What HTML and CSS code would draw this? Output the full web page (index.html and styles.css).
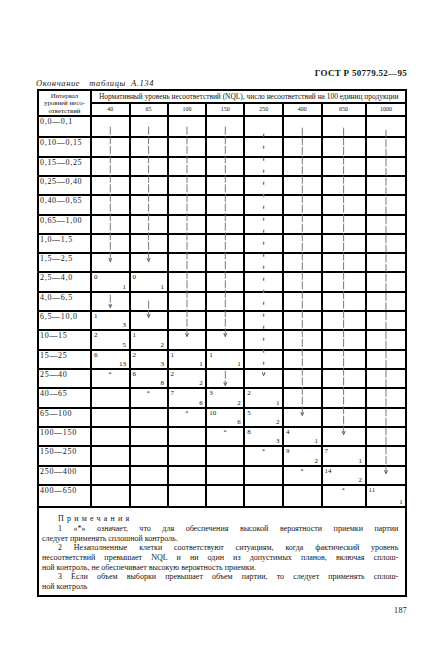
FILE: index.html
```html
<!DOCTYPE html>
<html lang="ru">
<head>
<meta charset="utf-8">
<title>ГОСТ Р 50779.52—95</title>
<link rel="stylesheet" href="styles.css">
</head>
<body>
<div class="page">
  <div class="doc-title">ГОСТ Р 50779.52—95</div>
  <div class="caption"><span class="w1">Окончание</span><span class="w2">таблицы</span><span class="w3">А.134</span></div>

  <div class="table-wrap">
    <div class="grid">
      <div class="h-int">Интервал<br>уровней несо-<br>ответствий</div>
      <div class="h-nql">Нормативный уровень несоответствий (NQL), число несоответствий на 100 единиц продукции</div>
      <div class="h-num">40</div><div class="h-num">65</div><div class="h-num">100</div><div class="h-num">150</div><div class="h-num">250</div><div class="h-num">400</div><div class="h-num">650</div><div class="h-num">1000</div>

      <div class="lbl">0,0—0,1</div><div class="c"></div><div class="c"></div><div class="c"></div><div class="c"></div><div class="c"></div><div class="c"></div><div class="c"></div><div class="c"></div>
      <div class="lbl">0,10—0,15</div><div class="c"></div><div class="c"></div><div class="c"></div><div class="c"></div><div class="c"></div><div class="c"></div><div class="c"></div><div class="c"></div>
      <div class="lbl">0,15—0,25</div><div class="c"></div><div class="c"></div><div class="c"></div><div class="c"></div><div class="c"></div><div class="c"></div><div class="c"></div><div class="c"></div>
      <div class="lbl">0,25—0,40</div><div class="c"></div><div class="c"></div><div class="c"></div><div class="c"></div><div class="c"></div><div class="c"></div><div class="c"></div><div class="c"></div>
      <div class="lbl">0,40—0,65</div><div class="c"></div><div class="c"></div><div class="c"></div><div class="c"></div><div class="c"></div><div class="c"></div><div class="c"></div><div class="c"></div>
      <div class="lbl">0,65—1,00</div><div class="c"></div><div class="c"></div><div class="c"></div><div class="c"></div><div class="c"></div><div class="c"></div><div class="c"></div><div class="c"></div>
      <div class="lbl">1,0—1,5</div><div class="c"></div><div class="c"></div><div class="c"></div><div class="c"></div><div class="c"></div><div class="c"></div><div class="c"></div><div class="c"></div>
      <div class="lbl">1,5—2,5</div><div class="c"></div><div class="c"></div><div class="c"></div><div class="c"></div><div class="c"></div><div class="c"></div><div class="c"></div><div class="c"></div>
      <div class="lbl">2,5—4,0</div><div class="c"><span class="a">0</span><span class="b">1</span></div><div class="c"><span class="a">0</span><span class="b">1</span></div><div class="c"></div><div class="c"></div><div class="c"></div><div class="c"></div><div class="c"></div><div class="c"></div>
      <div class="lbl">4,0—6,5</div><div class="c"></div><div class="c"></div><div class="c"></div><div class="c"></div><div class="c"></div><div class="c"></div><div class="c"></div><div class="c"></div>
      <div class="lbl">6,5—10,0</div><div class="c"><span class="a">1</span><span class="b">3</span></div><div class="c"></div><div class="c"></div><div class="c"></div><div class="c"></div><div class="c"></div><div class="c"></div><div class="c"></div>
      <div class="lbl">10—15</div><div class="c"><span class="a">2</span><span class="b">5</span></div><div class="c"><span class="a">1</span><span class="b">2</span></div><div class="c"></div><div class="c"></div><div class="c"></div><div class="c"></div><div class="c"></div><div class="c"></div>
      <div class="lbl">15—25</div><div class="c"><span class="a">6</span><span class="b">13</span></div><div class="c"><span class="a">2</span><span class="b">3</span></div><div class="c"><span class="a">1</span><span class="b">1</span></div><div class="c"><span class="a">1</span><span class="b">1</span></div><div class="c"></div><div class="c"></div><div class="c"></div><div class="c"></div>
      <div class="lbl">25—40</div><div class="c s"><span>*</span></div><div class="c"><span class="a">6</span><span class="b">8</span></div><div class="c"><span class="a">2</span><span class="b">2</span></div><div class="c"></div><div class="c"></div><div class="c"></div><div class="c"></div><div class="c"></div>
      <div class="lbl">40—65</div><div class="c"></div><div class="c s"><span>*</span></div><div class="c"><span class="a">7</span><span class="b">6</span></div><div class="c"><span class="a">3</span><span class="b">2</span></div><div class="c"><span class="a">2</span><span class="b">1</span></div><div class="c"></div><div class="c"></div><div class="c"></div>
      <div class="lbl">65—100</div><div class="c"></div><div class="c"></div><div class="c s"><span>*</span></div><div class="c"><span class="a">10</span><span class="b">6</span></div><div class="c"><span class="a">5</span><span class="b">2</span></div><div class="c"></div><div class="c"></div><div class="c"></div>
      <div class="lbl">100—150</div><div class="c"></div><div class="c"></div><div class="c"></div><div class="c s"><span>*</span></div><div class="c"><span class="a">8</span><span class="b">3</span></div><div class="c"><span class="a">4</span><span class="b">1</span></div><div class="c"></div><div class="c"></div>
      <div class="lbl">150—250</div><div class="c"></div><div class="c"></div><div class="c"></div><div class="c"></div><div class="c s"><span>*</span></div><div class="c"><span class="a">9</span><span class="b">2</span></div><div class="c"><span class="a">7</span><span class="b">1</span></div><div class="c"></div>
      <div class="lbl">250—400</div><div class="c"></div><div class="c"></div><div class="c"></div><div class="c"></div><div class="c"></div><div class="c s"><span>*</span></div><div class="c"><span class="a">14</span><span class="b">2</span></div><div class="c"></div>
      <div class="lbl">400—650</div><div class="c"></div><div class="c"></div><div class="c"></div><div class="c"></div><div class="c"></div><div class="c"></div><div class="c s"><span>*</span></div><div class="c"><span class="a">11</span><span class="b">1</span></div>
    </div>

    <svg class="arrows" viewBox="37 89.3 370.3 419" width="370.3" height="419" aria-hidden="true">
      <g class="dl">
        <path d="M110.3 127 V260"/><path d="M110.3 295 V306"/>
        <path d="M148.6 127 V260"/><path d="M148.6 301 V316"/>
        <path d="M187 127 V335"/>
        <path d="M225.3 127 V335"/><path d="M225.3 371 V384"/>
        <path d="M302.3 128 V414"/>
        <path d="M343.6 128 V433"/>
        <path d="M386 130 V472"/>
      </g>
      <path class="dl5" d="M263.6 134 V374"/>
      <g class="ah">
        <path d="M108.8 258.5 L110.3 262 L111.8 258.5"/>
        <path d="M108.8 304.5 L110.3 308 L111.8 304.5"/>
        <path d="M147.1 258.5 L148.6 262 L150.1 258.5"/>
        <path d="M147.1 314.5 L148.6 318 L150.1 314.5"/>
        <path d="M185.5 333.5 L187 337 L188.5 333.5"/>
        <path d="M223.8 333.5 L225.3 337 L226.8 333.5"/>
        <path d="M223.8 382.5 L225.3 386 L226.8 382.5"/>
        <path d="M262.1 372.5 L263.6 376 L265.1 372.5"/>
        <path d="M300.8 412.5 L302.3 416 L303.8 412.5"/>
        <path d="M342.1 431.5 L343.6 435 L345.1 431.5"/>
        <path d="M384.5 470.5 L386 474 L387.5 470.5"/>
      </g>
    </svg>
  </div>

  <div class="notes">
    <span class="ln ind head">Примечания</span>
    <span class="ln ind">1 «*» означает, что для обеспечения высокой вероятности приемки партии</span>
    <span class="ln end">следует применять сплошной контроль.</span>
    <span class="ln ind">2 Незаполненные клетки соответствуют ситуациям, когда фактический уровень</span>
    <span class="ln">несоответствий превышает NQL и ни один из допустимых планов, включая сплош-</span>
    <span class="ln end">ной контроль, не обеспечивает высокую вероятность приемки.</span>
    <span class="ln ind">3 Если объем выборки превышает объем партии, то следует применять сплош-</span>
    <span class="ln end">ной контроль</span>
  </div>

  <div class="page-num">187</div>
</div>
</body>
</html>
```

FILE: styles.css
```css
html, body {
  margin: 0;
  padding: 0;
  background: #fff;
}

.page {
  width: 436px;
  height: 661px;
  padding-top: 67.5px;
  box-sizing: border-box;
  font-family: "Liberation Serif", "DejaVu Serif", serif;
  color: #141414;
}

.doc-title {
  width: 407px;
  text-align: right;
  font-weight: bold;
  font-size: 9px;
  line-height: 10px;
  letter-spacing: 0.3px;
}

.caption {
  margin: 0.6px 0 0 36px;
  font-style: italic;
  font-size: 8.5px;
  line-height: 10px;
  letter-spacing: 0.6px;
  display: flex;
}

.caption .w2 { margin-left: 9px; }
.caption .w3 { margin-left: 5px; }

.table-wrap {
  position: relative;
  margin: 1.2px 0 0 37px;
  width: 370.3px;
}

.grid {
  display: grid;
  grid-template-columns: 51px 36.6px 36px 36.7px 36px 36.7px 36.6px 42px 38.7px;
  grid-template-rows: 11px 10.7px 19.3px repeat(18, 17.32px) 20.3px;
  gap: 2px;
  padding: 2px;
  background: #000;
  width: max-content;
}

.grid > div {
  background: #fff;
  color: #141414;
}

.h-int {
  grid-row: 1 / 3;
  font-size: 6.8px;
  line-height: 7.4px;
  text-align: center;
  display: flex;
  align-items: center;
  justify-content: center;
}

.h-nql {
  grid-column: 2 / 10;
  font-size: 7.4px;
  line-height: 11px;
  text-align: center;
  white-space: nowrap;
}

.h-num {
  font-size: 6px;
  line-height: 10.7px;
  text-align: center;
}

.lbl {
  font-size: 8px;
  line-height: 9px;
  letter-spacing: 0.7px;
  padding-left: 1px;
  white-space: nowrap;
}

.c {
  display: flex;
  flex-direction: column;
  justify-content: space-between;
  padding: 1px 2.5px 0 2px;
  font-size: 7px;
  line-height: 7px;
}

.c .b {
  align-self: flex-end;
}

.c.s {
  justify-content: flex-start;
  align-items: center;
  padding-top: 1px;
  font-size: 6px;
}

.arrows {
  position: absolute;
  left: 0;
  top: 0;
  pointer-events: none;
  overflow: visible;
}

.dl path {
  fill: none;
  stroke: #6a6a6a;
  stroke-width: 0.9;
  stroke-dasharray: 8 1.6;
}

.dl5 {
  fill: none;
  stroke: #7a7a7a;
  stroke-width: 1.4;
  stroke-dasharray: 3 9;
}

.ah path {
  fill: none;
  stroke: #444;
  stroke-width: 0.9;
}

.notes {
  width: 370.3px;
  height: 88.6px;
  margin-left: 37px;
  box-sizing: border-box;
  border: 2px solid #000;
  border-top: none;
  padding: 6px 7px 0 3px;
  font-size: 8px;
  line-height: 9.7px;
}

.ln {
  display: block;
  text-align: justify;
  text-align-last: justify;
}

.ln.end {
  text-align-last: left;
}

.ln.ind {
  padding-left: 16px;
}

.ln.head {
  text-align-last: left;
  letter-spacing: 3.2px;
}

.page-num {
  width: 407px;
  margin-top: 8.8px;
  text-align: right;
  font-size: 8px;
  line-height: 10px;
  letter-spacing: 0.3px;
}
```
